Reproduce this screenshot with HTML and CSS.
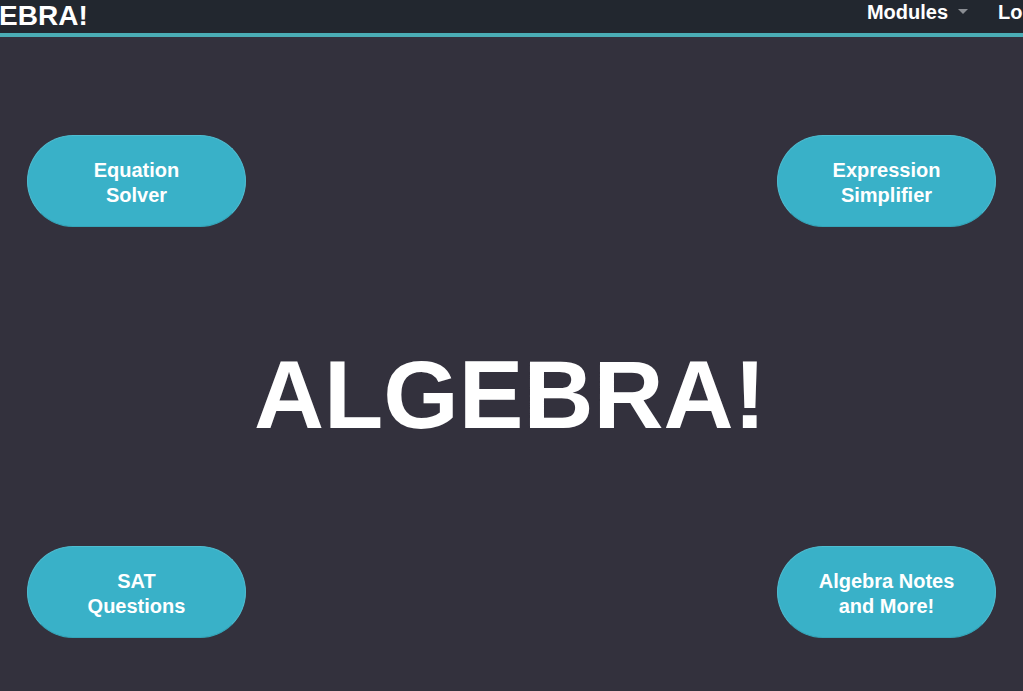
FILE: index.html
```html
<!DOCTYPE html>
<html lang="en">
<head>
<meta charset="utf-8">
<title>ALGEBRA!</title>
<link rel="stylesheet" href="styles.css">
</head>
<body>
<header class="navbar">
  <a class="brand" href="#">ALGEBRA!</a>
  <nav class="nav-links">
    <a class="nav-item dropdown" href="#">Modules <span class="caret"></span></a>
    <a class="nav-item" href="#">Log in</a>
  </nav>
</header>
<main class="stage">
  <div class="row">
    <a class="pill" href="#">Equation<br>Solver</a>
    <a class="pill" href="#">Expression<br>Simplifier</a>
  </div>
  <h1 class="title">ALGEBRA!</h1>
  <div class="row">
    <a class="pill" href="#">SAT<br>Questions</a>
    <a class="pill" href="#">Algebra Notes<br>and More!</a>
  </div>
</main>
</body>
</html>
```

FILE: styles.css
```css
html, body {
  margin: 0;
  padding: 0;
  height: 100%;
  overflow: hidden;
}
body {
  background: #33313d;
  font-family: "Liberation Sans", Arial, Helvetica, sans-serif;
  color: #fff;
}
a { color: #fff; text-decoration: none; }

.navbar {
  display: flex;
  align-items: flex-start;
  height: 33px;
  background: #22272f;
  border-bottom: 4px solid #4aadb5;
  white-space: nowrap;
  overflow: hidden;
}
.brand {
  flex: none;
  margin-left: -60px;
  font-size: 28px;
  font-weight: bold;
  line-height: 31px;
}
.nav-links {
  flex: none;
  display: flex;
  margin-left: auto;
  gap: 30px;
  transform: translateX(35px);
}
.nav-item {
  flex: none;
  font-size: 20px;
  font-weight: bold;
  line-height: 20px;
  padding-top: 2px;
  display: flex;
  align-items: flex-start;
}
.caret {
  display: inline-block;
  width: 0;
  height: 0;
  margin-left: 10px;
  margin-top: 7px;
  border-left: 5px solid transparent;
  border-right: 5px solid transparent;
  border-top: 5px solid #8a8d93;
}

.stage {
  padding: 98px 27px 0;
  display: flex;
  flex-direction: column;
}
.row {
  display: flex;
  justify-content: space-between;
}
.pill {
  width: 219px;
  height: 92px;
  box-sizing: border-box;
  padding-top: 4px;
  border-radius: 46px;
  background: #39b1c8;
  border: 1px solid #4fbcd0;
  border-bottom-color: #34a4b8;
  display: flex;
  align-items: center;
  justify-content: center;
  text-align: center;
  font-size: 20px;
  font-weight: bold;
  line-height: 25px;
}
.title {
  margin: 120px 0 103px;
  text-align: center;
  font-size: 97px;
  line-height: 96px;
  font-weight: bold;
  padding-right: 3px;
}
```
